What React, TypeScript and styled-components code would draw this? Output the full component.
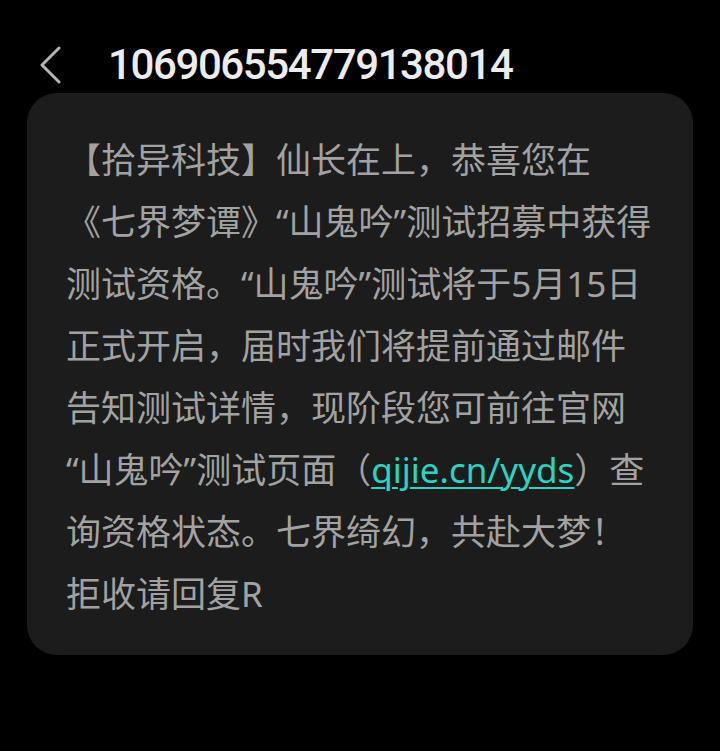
import React from "react";
import styled, { createGlobalStyle } from "styled-components";

const GlobalStyle = createGlobalStyle`
  html, body {
    margin: 0;
    padding: 0;
    background: #000;
  }
`;

const Page = styled.div`
  width: 720px;
  min-height: 751px;
  background: #000;
  display: flex;
  flex-direction: column;
`;

const Header = styled.header`
  height: 93px;
  display: flex;
  align-items: center;
  padding: 40px 0 4px 38px;
  gap: 44px;
  box-sizing: border-box;
`;

const BackButton = styled.button`
  background: none;
  border: none;
  padding: 0;
  display: flex;
  align-items: center;
`;

const Number = styled.h1`
  margin: 0;
  font-family: Roboto, "Liberation Sans", sans-serif;
  font-weight: 500;
  font-size: 42px;
  letter-spacing: -1.4px;
  color: #ececec;
`;

const Bubble = styled.article`
  margin: 0 27px;
  background: #1c1c1c;
  border-radius: 30px;
  padding: 36px 10px 30px 39px;
`;

const Message = styled.p`
  margin: 0;
  font-family: "Noto Sans", "Noto Sans CJK SC", sans-serif;
  font-size: 35px;
  line-height: 62px;
  color: #a2a2a2;
  white-space: nowrap;
`;

const Link = styled.a`
  color: #2ad4c0;
  text-decoration: underline;
  text-underline-offset: 4px;
  text-decoration-thickness: 2px;
`;

const lines: React.ReactNode[] = [
  "【拾异科技】仙长在上，恭喜您在",
  "《七界梦谭》“山鬼吟”测试招募中获得",
  "测试资格。“山鬼吟”测试将于5月15日",
  "正式开启，届时我们将提前通过邮件",
  "告知测试详情，现阶段您可前往官网",
  <>
    “山鬼吟”测试页面（<Link href="#">qijie.cn/yyds</Link>）查
  </>,
  "询资格状态。七界绮幻，共赴大梦！",
  "拒收请回复R",
];

const App = () => {
  return (
    <Page>
      <GlobalStyle />
      <Header>
        <BackButton aria-label="back">
          <svg width="26" height="38" viewBox="0 0 26 38">
            <polyline
              points="21,2 4,19 21,36"
              fill="none"
              stroke="#b5b5b5"
              strokeWidth="3"
              strokeLinecap="round"
              strokeLinejoin="round"
            />
          </svg>
        </BackButton>
        <Number>106906554779138014</Number>
      </Header>
      <Bubble>
        <Message>
          {lines.map((line, i) => (
            <React.Fragment key={i}>
              {line}
              {i < lines.length - 1 && <br />}
            </React.Fragment>
          ))}
        </Message>
      </Bubble>
    </Page>
  );
};

export default App;
